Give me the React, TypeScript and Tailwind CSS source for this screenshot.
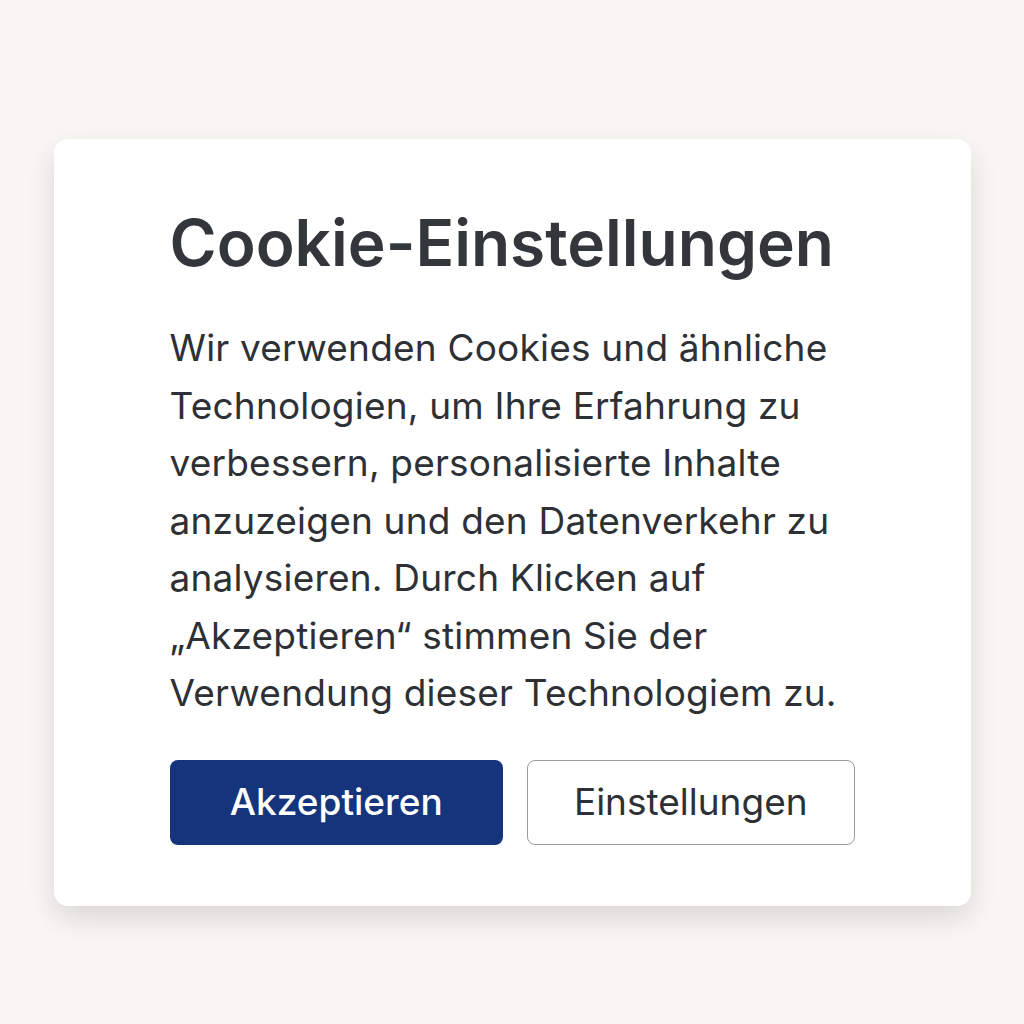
import React from 'react';

const App: React.FC = () => {
  return (
    <div className="min-h-screen w-full bg-[#f9f7f3] flex items-start justify-center pt-[139px]" style={{ fontFamily: 'Inter, "Noto Sans", sans-serif' }}>
      <div className="w-[917px] bg-white rounded-[14px] shadow-[0_12px_30px_rgba(0,0,0,0.13)] px-[116px] pt-[64px] pb-[61px]">
        <h2 className="text-[64px] leading-[80px] font-semibold text-[#33373c]">
          Cookie-Einstellungen
        </h2>
        <p className="mt-[36px] text-[37px] leading-[57.5px] tracking-[0.2px] text-[#2d3035]">
          Wir verwenden Cookies und ähnliche Technologien, um Ihre Erfahrung zu verbessern, personalisierte Inhalte anzuzeigen und den Datenverkehr zu analysieren. Durch Klicken auf „Akzeptieren“ stimmen Sie der Verwendung dieser Technologiem zu.
        </p>
        <div className="mt-[38px] flex gap-[24px]">
          <button className="w-[334px] h-[85px] rounded-[8px] bg-[#15347c] text-white text-[37px] font-medium">
            Akzeptieren
          </button>
          <button className="w-[328px] h-[85px] rounded-[8px] border border-[#9a9ca3] bg-white text-[#2d3035] text-[37px]">
            Einstellungen
          </button>
        </div>
      </div>
    </div>
  );
};

export default App;
